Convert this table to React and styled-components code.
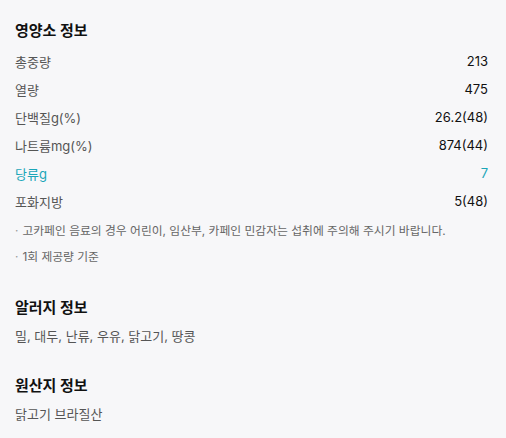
import React from "react";
import styled, { createGlobalStyle } from "styled-components";

const Global = createGlobalStyle`
  html, body { margin: 0; padding: 0; background: #f7f7f9; }
  body { font-family: "Inter", "Noto Sans CJK KR", sans-serif; }
`;

const Page = styled.div`
  display: flex;
  flex-direction: column;
  padding: 20px 18px 12px 15px;
  background: #f7f7f9;
`;

const Section = styled.section`
  display: flex;
  flex-direction: column;
  & + & { margin-top: ${(p) => p.$gap || 23}px; }
`;

const Title = styled.h2`
  margin: 0 0 5px;
  font-size: 15px;
  line-height: 22px;
  font-weight: 700;
  color: #111;
`;

const Row = styled.div`
  display: flex;
  justify-content: space-between;
  align-items: center;
  height: 28px;
  font-size: 13px;
  color: ${(p) => (p.$accent ? "#1aa6b8" : "#555")};
`;

const Value = styled.span`
  color: ${(p) => (p.$accent ? "#1aa6b8" : "#111")};
`;

const Notes = styled.div`
  display: flex;
  flex-direction: column;
  margin-top: 3px;
`;

const Note = styled.div`
  font-size: 11.8px;
  line-height: 26px;
  color: #666;
  &::before { content: "·"; margin-right: 4px; color: #999; }
`;

const Desc = styled.div`
  font-size: 13px;
  line-height: 24px;
  color: #555;
`;

const rows = [
  ["총중량", "213"],
  ["열량", "475"],
  ["단백질g(%)", "26.2(48)"],
  ["나트륨mg(%)", "874(44)"],
  ["당류g", "7", true],
  ["포화지방", "5(48)"],
];

export default function App() {
  return (
    <>
      <Global />
      <Page>
        <Section>
          <Title>영양소 정보</Title>
          {rows.map(([l, v, a]) => (
            <Row key={l} $accent={a}>
              <span>{l}</span>
              <Value $accent={a}>{v}</Value>
            </Row>
          ))}
          <Notes>
            <Note>고카페인 음료의 경우 어린이, 임산부, 카페인 민감자는 섭취에 주의해 주시기 바랍니다.</Note>
            <Note>1회 제공량 기준</Note>
          </Notes>
        </Section>
        <Section $gap={22}>
          <Title>알러지 정보</Title>
          <Desc>밀, 대두, 난류, 우유, 닭고기, 땅콩</Desc>
        </Section>
        <Section $gap={27}>
          <Title>원산지 정보</Title>
          <Desc>닭고기 브라질산</Desc>
        </Section>
      </Page>
    </>
  );
}
